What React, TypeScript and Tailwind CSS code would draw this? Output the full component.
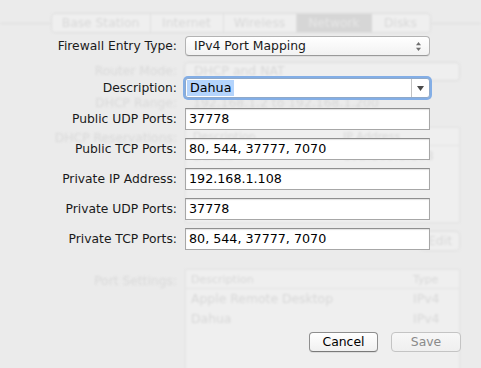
import React from "react";

function Field({ value }: { value: string }) {
  return (
    <div className="h-[22px] w-[245px] border border-[#a7a7a7] border-t-[#8f8f8f] bg-white shadow-[inset_0_1px_1px_rgba(0,0,0,0.12)] flex items-center pl-[3px] text-[12.7px] text-black leading-none">
      {value}
    </div>
  );
}

function Label({ children, dim }: { children: React.ReactNode; dim?: boolean }) {
  return (
    <div className={`w-[177px] text-right text-[12.3px] leading-none ${dim ? "text-[#d9d9d9]" : "text-[#1a1a1a]"}`}>
      {children}
    </div>
  );
}

function Row({ label, children, className = "" }: { label: string; children: React.ReactNode; className?: string }) {
  return (
    <div className={`flex items-center gap-[8px] ${className}`}>
      <Label>{label}</Label>
      {children}
    </div>
  );
}

function Ghost() {
  const g = "text-[#d8d8d8]";
  return (
    <div className="absolute inset-0 blur-[1.2px] pointer-events-none flex flex-col">
      {/* tabs */}
      <div className="mt-[13px] flex items-center h-[20px]">
        <div className="flex-1 h-px bg-[#dedede]" />
        <div className="flex h-[20px] w-[380px] border border-[#dcdcdc] rounded-[4px] bg-[#efefef] text-[12.3px] leading-none">
          <div className={`w-[99px] flex items-center justify-center border-r border-[#dedede] ${g}`}>Base Station</div>
          <div className={`w-[73px] flex items-center justify-center border-r border-[#dedede] ${g}`}>Internet</div>
          <div className={`w-[73px] flex items-center justify-center border-r border-[#dedede] ${g}`}>Wireless</div>
          <div className="w-[75px] flex items-center justify-center bg-[#d6d6d6] text-[#e6e6e6]">Network</div>
          <div className={`flex-1 flex items-center justify-center ${g}`}>Disks</div>
        </div>
        <div className="flex-1 h-px bg-[#dedede]" />
      </div>
      {/* router mode */}
      <div className="mt-[29px] flex items-center gap-[7px]">
        <Label dim>Router Mode:</Label>
        <div className={`h-[19px] w-[276px] rounded-[4px] border border-[#dcdcdc] bg-[#efefef] flex items-center pl-[9px] text-[12.4px] leading-none ${g}`}>
          DHCP and NAT
        </div>
      </div>
      {/* dhcp range */}
      <div className="mt-[16px] flex items-center gap-[8px]">
        <Label dim>DHCP Range:</Label>
        <div className={`text-[12.4px] leading-none pl-[8px] ${g}`}>192.168.1.2 to 192.168.1.200</div>
      </div>
      {/* reservations */}
      <div className="mt-[18px] flex items-start gap-[8px]">
        <div className="pt-[5px]">
          <Label dim>DHCP Reservations:</Label>
        </div>
        <div className="w-[275px] h-[96px] border border-[#e2e2e2] bg-[#efefef] flex flex-col">
          <div className={`h-[18px] flex items-center text-[11px] leading-none border-b border-[#e2e2e2] ${g}`}>
            <div className="w-[157px] pl-[7px]">Description</div>
            <div>IP Address</div>
          </div>
          <div className={`h-[20px] flex items-center text-[12.4px] leading-none ${g}`}>
            <div className="w-[157px] pl-[7px]">Dahua</div>
            <div>192.168.1.108</div>
          </div>
        </div>
      </div>
      <div className="mt-[8px] flex justify-end pr-[21px]">
        <div className={`h-[20px] w-[40px] rounded-[4px] border border-[#dedede] bg-[#efefef] flex items-center justify-center text-[12.4px] leading-none ${g}`}>
          Edit
        </div>
      </div>
      {/* port settings */}
      <div className="mt-[18px] flex items-start gap-[8px]">
        <div className="pt-[6px]">
          <Label dim>Port Settings:</Label>
        </div>
        <div className="w-[275px] h-[110px] border border-[#e2e2e2] bg-[#efefef] flex flex-col">
          <div className={`h-[19px] flex items-center text-[11px] leading-none border-b border-[#e2e2e2] ${g}`}>
            <div className="w-[227px] pl-[5px]">Description</div>
            <div>Type</div>
          </div>
          <div className={`h-[20px] flex items-center text-[12.4px] leading-none ${g}`}>
            <div className="w-[227px] pl-[5px]">Apple Remote Desktop</div>
            <div>IPv4</div>
          </div>
          <div className={`h-[20px] flex items-center text-[12.4px] leading-none ${g}`}>
            <div className="w-[227px] pl-[5px]">Dahua</div>
            <div>IPv4</div>
          </div>
        </div>
      </div>
    </div>
  );
}

export default function App() {
  return (
    <div className="relative w-[481px] h-[368px] overflow-hidden bg-[#ebebeb] font-['DejaVu_Sans',sans-serif]">
      <Ghost />
      <div className="relative flex flex-col pt-[36px]">
        <Row label="Firewall Entry Type:">
          <div className="h-[20px] w-[245px] rounded-[4px] border border-[#b3b3b3] border-b-[#9a9a9a] bg-gradient-to-b from-white to-[#f2f2f2] shadow-[0_1px_0_rgba(0,0,0,0.05)] flex items-center justify-between pl-[8px] pr-[7px]">
            <span className="text-[12.4px] leading-none text-[#1a1a1a]">IPv4 Port Mapping</span>
            <svg width="7" height="11" viewBox="0 0 7 11">
              <path d="M3.5 1 L6 4.2 L1 4.2 Z" fill="#6f6f6f" />
              <path d="M3.5 10 L6 6.8 L1 6.8 Z" fill="#6f6f6f" />
            </svg>
          </div>
        </Row>
        <Row label="Description:" className="mt-[22px]">
          <div className="h-[20px] w-[245px] rounded-[3px] border border-[#8fa9c9] bg-white shadow-[0_0_0_2px_#83aee6] flex items-stretch">
            <div className="flex-1 flex items-center pl-[1px]">
              <span className="bg-[#b4d4fc] h-[16px] flex items-center px-[3px] text-[12.7px] leading-none text-black">Dahua</span>
            </div>
            <div className="w-[18px] border-l border-[#c2c2c2] flex items-center justify-center">
              <svg width="7" height="5" viewBox="0 0 7 5">
                <path d="M0 0 L7 0 L3.5 5 Z" fill="#4a4a4a" />
              </svg>
            </div>
          </div>
        </Row>
        <Row label="Public UDP Ports:" className="mt-[10px]">
          <Field value="37778" />
        </Row>
        <Row label="Public TCP Ports:" className="mt-[8px]">
          <Field value="80, 544, 37777, 7070" />
        </Row>
        <Row label="Private IP Address:" className="mt-[8px]">
          <Field value="192.168.1.108" />
        </Row>
        <Row label="Private UDP Ports:" className="mt-[8px]">
          <Field value="37778" />
        </Row>
        <Row label="Private TCP Ports:" className="mt-[8px]">
          <Field value="80, 544, 37777, 7070" />
        </Row>
        <div className="mt-[82px] flex justify-end gap-[13px] pr-[20px]">
          <div className="h-[20px] w-[69px] rounded-[4px] border border-[#8e8e8e] border-b-[#7a7a7a] bg-gradient-to-b from-white to-[#f0f0f0] shadow-[0_1px_0_rgba(0,0,0,0.08)] flex items-center justify-center text-[12.4px] leading-none text-black">
            Cancel
          </div>
          <div className="h-[20px] w-[70px] rounded-[4px] border border-[#c4c4c4] bg-gradient-to-b from-[#f7f7f7] to-[#efefef] flex items-center justify-center text-[12.4px] leading-none text-[#8a8a8a]">
            Save
          </div>
        </div>
      </div>
    </div>
  );
}
